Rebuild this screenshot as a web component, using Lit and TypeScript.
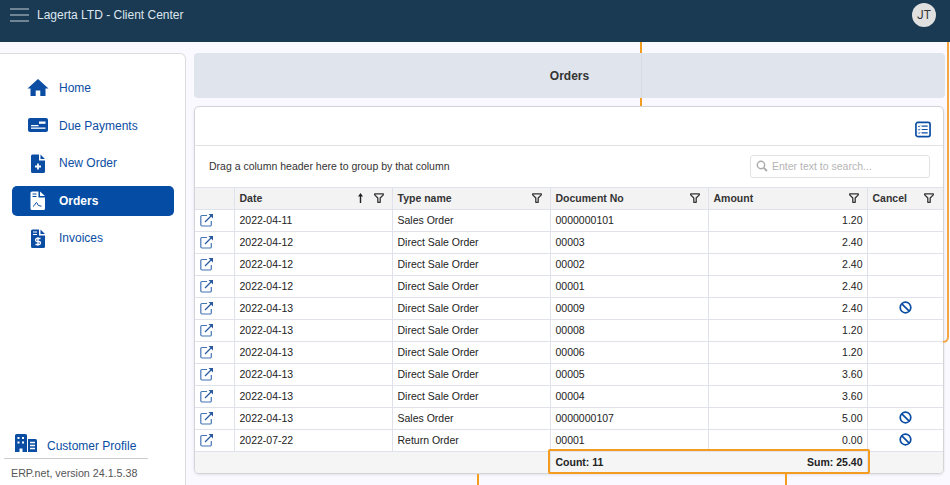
import { LitElement, html, css, svg } from 'lit';
import { customElement } from 'lit/decorators.js';

const rows = [
  ['2022-04-11', 'Sales Order', '0000000101', '1.20', false],
  ['2022-04-12', 'Direct Sale Order', '00003', '2.40', false],
  ['2022-04-12', 'Direct Sale Order', '00002', '2.40', false],
  ['2022-04-12', 'Direct Sale Order', '00001', '2.40', false],
  ['2022-04-13', 'Direct Sale Order', '00009', '2.40', true],
  ['2022-04-13', 'Direct Sale Order', '00008', '1.20', false],
  ['2022-04-13', 'Direct Sale Order', '00006', '1.20', false],
  ['2022-04-13', 'Direct Sale Order', '00005', '3.60', false],
  ['2022-04-13', 'Direct Sale Order', '00004', '3.60', false],
  ['2022-04-13', 'Sales Order', '0000000107', '5.00', true],
  ['2022-07-22', 'Return Order', '00001', '0.00', true],
] as const;

const filterIcon = html`<svg class="filter" width="10" height="10" viewBox="0 0 10 10">
  <path d="M.7.8h8.600v1.100L6.200 5v4.300H3.800V5L.7 1.900z" fill="none" stroke="#333" stroke-width="1.300" stroke-linejoin="round"/>
</svg>`;

const sortIcon = html`<svg width="5" height="10" viewBox="0 0 5 10">
  <path d="M2.500 0 5 3.500H3.200V10H1.800V3.500H0z" fill="#222"/>
</svg>`;

const openIcon = html`<svg width="14" height="14" viewBox="0 0 14 14">
  <path d="M7 2.500H2a1.200 1.200 0 0 0-1.200 1.200v8.100A1.200 1.200 0 0 0 2 13h8.100a1.200 1.200 0 0 0 1.200-1.200V8" fill="none" stroke="#4474b4" stroke-width="1.200"/>
  <path d="M5 9 11.500 2.500" stroke="#2a5a9e" stroke-width="1.300" fill="none"/>
  <path d="M8.500 1h4.500v4.500z" fill="#2a5a9e"/>
</svg>`;

const cancelIcon = html`<svg width="13" height="13" viewBox="0 0 13 13">
  <circle cx="6.500" cy="6.500" r="5.300" fill="none" stroke="#0a4da3" stroke-width="1.700"/>
  <path d="M2.800 2.800 10.200 10.200" stroke="#0a4da3" stroke-width="1.700"/>
</svg>`;

const navIcons = {
  home: svg`<path d="M11 1 0.500 10.500h3V18h5.200v-5.500h4.600V18h5.200v-7.500h3z" fill="currentColor"/>`,
  card: svg`<rect x="1" y="3" width="20" height="14" rx="2" fill="currentColor"/>
    <rect x="12" y="6.500" width="6.500" height="2.300" fill="#fff"/><rect x="4" y="10" width="7.500" height="1.300" fill="#fff"/><rect x="4" y="12.500" width="14.500" height="1.300" fill="#fff"/>`,
  plus: svg`<path d="M5.500 1.500H12v6h6v11a1.500 1.500 0 0 1-1.500 1.500h-11A1.500 1.500 0 0 1 4 18.500V3A1.500 1.500 0 0 1 5.500 1.500zM13.500 1.500l4.500 4.500h-4.500z" fill="currentColor"/>
    <path d="M11 10.500v6M8 13.500h6" stroke="#fff" stroke-width="1.800"/>`,
  pdf: svg`<path d="M5 1.500H11.500v6h6.500v11a1.500 1.500 0 0 1-1.500 1.500H5a1.500 1.500 0 0 1-1.500-1.500V3A1.500 1.500 0 0 1 5 1.500zM13 1.500l5 4.500h-5z" fill="currentColor"/>
    <path d="M5.500 4h4M5.500 6.500h4" stroke="#0a4da3" stroke-width="1"/><path d="M6 16.500c2-1 2.500-4 3.500-4s1 3 2 3 2 .5 3 .8" stroke="#0a4da3" stroke-width="1" fill="none"/>`,
  dollar: svg`<path d="M5.500 1.500H12v6h6v11a1.500 1.500 0 0 1-1.500 1.500h-11A1.500 1.500 0 0 1 4 18.500V3A1.500 1.500 0 0 1 5.500 1.500zM13.500 1.500l4.500 4.500h-4.500z" fill="currentColor"/>
    <path d="M6 4h4M6 6.500h4" stroke="#fff" stroke-width="1"/><path d="M13.500 10.500h-3.500a1.500 1.500 0 0 0 0 3h2a1.500 1.500 0 0 1 0 3H8.500M11 9.200v8.600" stroke="#fff" stroke-width="1.300" fill="none"/>`,
};

@customElement('app-root')
export class AppRoot extends LitElement {
  static styles = css`
    :host {
      display: block;
      position: relative;
      width: 950px;
      height: 485px;
      overflow: hidden;
      background: #f9f9ff;
      font-family: 'Liberation Sans', Arial, sans-serif;
      font-size: 12px;
      color: #222;
    }
    * { box-sizing: border-box; }

    .topbar {
      height: 42px;
      background: #1a3a54;
      display: flex;
      align-items: flex-start;
      padding: 7px 14px 0 10px;
      color: #dde6ee;
    }
    .burger { width: 19px; display: flex; flex-direction: column; gap: 4px; margin-top: 1px; }
    .burger i { display: block; height: 2px; background: #6f8596; }
    .brand { margin-left: 8px; font-size: 12px; line-height: 16px; }
    .avatar {
      margin-left: auto;
      margin-top: -4px;
      width: 24px;
      height: 24px;
      border-radius: 50%;
      background: #e0e0e0;
      color: #333;
      font-family: Roboto, sans-serif;
      font-size: 12px;
      display: flex;
      align-items: center;
      justify-content: center;
    }

    .page { display: flex; padding: 11px 6px 0 0; gap: 8px; }

    .sidebar {
      width: 186px;
      height: 440px;
      flex: none;
      background: #fff;
      border: 1px solid #dcdcdc;
      border-left: none;
      border-radius: 0 6px 0 0;
      padding: 19px 11px 0 12px;
      display: flex;
      flex-direction: column;
    }
    .nav { display: flex; flex-direction: column; gap: 7.5px; }
    .nav a {
      height: 30px;
      display: flex;
      align-items: center;
      gap: 10px;
      padding-left: 15px;
      border-radius: 5px;
      color: #0a4da3;
      font-size: 12px;
    }
    .nav a svg { flex: none; }
    .nav a.active { background: #054da4; color: #fff; font-weight: bold; }
    .profile {
      margin-top: auto;
      margin-left: -12px;
      margin-right: -11px;
      padding: 0 0 0 14px;
      display: flex;
      align-items: center;
      gap: 9px;
      height: 24px;
      color: #0a4da3;
    }
    .profile svg { margin-top: -6px; }
    .version {
      margin: 0 26px 0 -8px;
      border-top: 1px solid #ccc;
      padding: 8px 0 0 7px;
      height: 34px;
      font-size: 10.7px;
      color: #555;
      white-space: nowrap;
    }

    .main { flex: 1; display: flex; flex-direction: column; gap: 8px; min-width: 0; }
    .title {
      height: 45px;
      margin-right: -1px;
      background: #dfe4ed;
      border-radius: 4px;
      display: flex;
      align-items: center;
      justify-content: center;
      font-weight: bold;
      color: #333;
    }
    .card {
      height: 368px;
      background: #fff;
      border: 1px solid #d4d4d8;
      border-radius: 5px;
      box-shadow: 0 1px 3px rgba(0, 0, 0, 0.1);
      overflow: hidden;
    }
    .tools {
      height: 39px;
      display: flex;
      justify-content: flex-end;
      align-items: flex-start;
      padding: 14px 12px 0 0;
      border-bottom: 1px solid #e2e2e2;
    }
    .group {
      height: 41px;
      display: flex;
      align-items: center;
      justify-content: space-between;
      padding: 0 13px 1px 14px;
      font-size: 10.5px;
      color: #333;
    }
    .search {
      width: 180px;
      height: 23px;
      border: 1px solid #e2e2e2;
      border-radius: 3px;
      display: flex;
      align-items: center;
      gap: 4px;
      padding-left: 5px;
      color: #b5b5b5;
      font-size: 10.5px;
    }

    table { border-collapse: collapse; table-layout: fixed; width: 748px; font-size: 10.5px; }
    .w-open { width: 39px; }
    .w-col { width: 158px; }
    .w-amount { width: 159px; }
    .w-cancel { width: 76px; }
    th, td {
      border: 1px solid #dfe2ea;
      height: 22px;
      padding: 0 4px 2px 5px;
      white-space: nowrap;
      text-align: left;
      color: #222;
    }
    tr > :first-child { border-left: none; }
    tr > :last-child { border-right: none; }
    th { background: #f3f3f3; font-weight: bold; color: #333; padding-right: 8px; }
    tr > th:last-child { padding-right: 9px; }
    th .cell { display: flex; align-items: center; gap: 11px; }
    th .cell span { margin-right: auto; }
    td.num { text-align: right; padding-right: 4px; }
    td.open { padding: 0 0 2px 5px; line-height: 0; }
    td.cancel { text-align: center; padding: 0 0 2px; line-height: 0; }
    tfoot td { background: #f5f5f5; font-weight: bold; border-bottom: none; }
    tfoot td:first-child { border-right: none; }
    tfoot .sum { display: flex; justify-content: space-between; }

    .mark { position: absolute; background: #f39c1f; width: 2px; }
    .mark.a { left: 640px; top: 42px; height: 11px; }
    .mark.b { left: 640px; top: 98px; height: 8px; }
    .mark.c { left: 477px; top: 474px; height: 11px; }
    .mark.d { left: 785px; top: 474px; height: 11px; }
    .highlight {
      position: absolute;
      left: 548px;
      top: 449px;
      width: 322px;
      height: 25px;
      border: 2px solid #f39c1f;
      border-radius: 2px;
    }
    .curve {
      position: absolute;
      left: 943px;
      top: 42px;
      width: 6px;
      height: 301px;
      border-right: 2px solid #f5a742;
      border-bottom: 2px solid #f5a742;
      border-bottom-right-radius: 6px;
    }
    .veil { position: absolute; left: 641px; top: 53px; width: 1px; height: 45px; background: rgba(120, 120, 120, 0.08); }
  `;

  private navItem(icon: keyof typeof navIcons, label: string, active = false) {
    return html`<a class=${active ? 'active' : ''}>
      <svg width="22" height="21" viewBox="0 0 22 21">${navIcons[icon]}</svg>
      ${label}
    </a>`;
  }

  render() {
    return html`
      <div class="topbar">
        <div class="burger"><i></i><i></i><i></i></div>
        <div class="brand">Lagerta LTD - Client Center</div>
        <div class="avatar">JT</div>
      </div>
      <div class="page">
        <aside class="sidebar">
          <nav class="nav">
            ${this.navItem('home', 'Home')}
            ${this.navItem('card', 'Due Payments')}
            ${this.navItem('plus', 'New Order')}
            ${this.navItem('pdf', 'Orders', true)}
            ${this.navItem('dollar', 'Invoices')}
          </nav>
          <div class="profile">
            <svg width="24" height="20" viewBox="0 0 24 20">
              <path d="M1 2.500A1.500 1.500 0 0 1 2.500 1h9A1.500 1.500 0 0 1 13 2.500V19H8.500v-3.500h-3V19H1z" fill="#0a4da3"/>
              <path d="M3.500 4h2v2h-2zM8 4h2v2H8zM3.500 8.500h2v2h-2zM8 8.500h2v2H8z" fill="#fff"/>
              <path d="M14 6h7.500A1.500 1.500 0 0 1 23 7.500V19h-9z" fill="#0a4da3"/>
              <path d="M16 9.500h5M16 12.500h5M16 15.500h5" stroke="#fff" stroke-width="1.400"/>
            </svg>
            Customer Profile
          </div>
          <div class="version">ERP.net, version 24.1.5.38</div>
        </aside>
        <main class="main">
          <div class="title">Orders</div>
          <section class="card">
            <div class="tools">
              <svg width="16" height="17" viewBox="0 0 17 17">
                <rect x="1" y="1" width="15" height="15" rx="2" fill="none" stroke="#0a4da3" stroke-width="1.800"/>
                <path d="M7 5h6.500M7 8.500h6.500M7 12h6.500" stroke="#0a4da3" stroke-width="1.300"/>
                <path d="M3.300 4.800l1 1 1.200-1.500M3.300 8.300l1 1 1.200-1.500M3.300 11.800l1 1 1.200-1.500" stroke="#0a4da3" stroke-width="0.900" fill="none"/>
              </svg>
            </div>
            <div class="group">
              <span>Drag a column header here to group by that column</span>
              <div class="search">
                <svg width="12" height="12" viewBox="0 0 12 12">
                  <circle cx="5" cy="5" r="3.700" fill="none" stroke="#aaa" stroke-width="1.400"/>
                  <path d="M7.800 7.800 11 11" stroke="#aaa" stroke-width="1.800"/>
                </svg>
                Enter text to search...
              </div>
            </div>
            <table>
              <colgroup>
                <col class="w-open" /><col class="w-col" /><col class="w-col" />
                <col class="w-col" /><col class="w-amount" /><col class="w-cancel" />
              </colgroup>
              <thead>
                <tr>
                  <th></th>
                  <th><div class="cell"><span>Date</span>${sortIcon}${filterIcon}</div></th>
                  <th><div class="cell"><span>Type name</span>${filterIcon}</div></th>
                  <th><div class="cell"><span>Document No</span>${filterIcon}</div></th>
                  <th><div class="cell"><span>Amount</span>${filterIcon}</div></th>
                  <th><div class="cell"><span>Cancel</span>${filterIcon}</div></th>
                </tr>
              </thead>
              <tbody>
                ${rows.map(
                  ([date, type, doc, amount, cancel]) => html`<tr>
                    <td class="open">${openIcon}</td>
                    <td>${date}</td>
                    <td>${type}</td>
                    <td>${doc}</td>
                    <td class="num">${amount}</td>
                    <td class="cancel">${cancel ? cancelIcon : ''}</td>
                  </tr>`,
                )}
              </tbody>
              <tfoot>
                <tr>
                  <td colspan="3"></td>
                  <td colspan="2"><div class="sum"><span>Count: 11</span><span>Sum: 25.40</span></div></td>
                  <td></td>
                </tr>
              </tfoot>
            </table>
          </section>
        </main>
      </div>
      <div class="mark a"></div>
      <div class="mark b"></div>
      <div class="veil"></div>
      <div class="curve"></div>
      <div class="mark c"></div>
      <div class="mark d"></div>
      <div class="highlight"></div>
    `;
  }
}
